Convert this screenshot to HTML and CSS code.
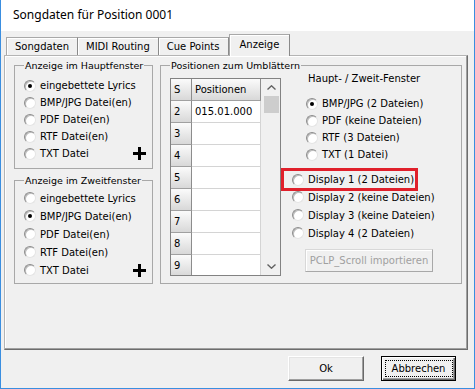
FILE: index.html
```html
<!DOCTYPE html>
<html>
  <head>
    <meta charset="utf-8">
    <title>Songdaten für Position 0001</title>
    <link rel="stylesheet" href="styles.css">
  </head>
  <body>
    <div class="window">
      <div class="titlebar">Songdaten für Position 0001</div>

      <div class="tabs">
        <div class="tab">Songdaten</div>
        <div class="tab">MIDI Routing</div>
        <div class="tab">Cue Points</div>
        <div class="tab active">Anzeige</div>
      </div>

      <div class="panel">
        <div class="left-col">
          <fieldset class="group group-main">
            <legend>Anzeige im Hauptfenster</legend>
            <label class="radio checked"><span class="dot"></span>eingebettete Lyrics</label>
            <label class="radio"><span class="dot"></span>BMP/JPG Datei(en)</label>
            <label class="radio"><span class="dot"></span>PDF Datei(en)</label>
            <label class="radio"><span class="dot"></span>RTF Datei(en)</label>
            <label class="radio"><span class="dot"></span>TXT Datei
              <svg class="plus" width="13" height="13" viewBox="0 0 13 13">
                <rect x="0" y="5" width="13" height="3" fill="#000" />
                <rect x="5" y="0" width="3" height="13" fill="#000" />
              </svg>
            </label>
          </fieldset>

          <fieldset class="group group-second">
            <legend>Anzeige im Zweitfenster</legend>
            <label class="radio"><span class="dot"></span>eingebettete Lyrics</label>
            <label class="radio checked"><span class="dot"></span>BMP/JPG Datei(en)</label>
            <label class="radio"><span class="dot"></span>PDF Datei(en)</label>
            <label class="radio"><span class="dot"></span>RTF Datei(en)</label>
            <label class="radio"><span class="dot"></span>TXT Datei
              <svg class="plus" width="13" height="13" viewBox="0 0 13 13">
                <rect x="0" y="5" width="13" height="3" fill="#000" />
                <rect x="5" y="0" width="3" height="13" fill="#000" />
              </svg>
            </label>
          </fieldset>
        </div>

        <fieldset class="group group-wide">
          <legend>Positionen zum Umblättern</legend>
          <div class="group-body">
            <div class="grid">
              <div class="cells">
                <div class="cell head">S</div>
                <div class="cell head">Positionen</div>
                <div class="cell head">2</div>
                <div class="cell">015.01.000</div>
                <div class="cell head">3</div>
                <div class="cell"></div>
                <div class="cell head">4</div>
                <div class="cell"></div>
                <div class="cell head">5</div>
                <div class="cell"></div>
                <div class="cell head">6</div>
                <div class="cell"></div>
                <div class="cell head">7</div>
                <div class="cell"></div>
                <div class="cell head">8</div>
                <div class="cell"></div>
                <div class="cell head">9</div>
                <div class="cell"></div>
              </div>
              <div class="scrollbar">
                <div class="arrow">
                  <svg width="9" height="5" viewBox="0 0 9 5"><polyline points="0.5,4.5 4.5,0.8 8.5,4.5" fill="none" stroke="#606060" stroke-width="1.4" /></svg>
                </div>
                <div class="thumb"></div>
                <div class="track"></div>
                <div class="arrow">
                  <svg width="9" height="5" viewBox="0 0 9 5"><polyline points="0.5,0.5 4.5,4.2 8.5,0.5" fill="none" stroke="#606060" stroke-width="1.4" /></svg>
                </div>
              </div>
            </div>

            <div class="options">
              <div class="caption">Haupt- / Zweit-Fenster</div>
              <div class="file-list">
                <label class="radio checked"><span class="dot"></span>BMP/JPG (2 Dateien)</label>
                <label class="radio"><span class="dot"></span>PDF (keine Dateien)</label>
                <label class="radio"><span class="dot"></span>RTF (3 Dateien)</label>
                <label class="radio"><span class="dot"></span>TXT (1 Datei)</label>
              </div>
              <div class="display-list">
                <label class="radio marked"><span class="dot"></span>Display 1 (2 Dateien)</label>
                <label class="radio"><span class="dot"></span>Display 2 (keine Dateien)</label>
                <label class="radio"><span class="dot"></span>Display 3 (keine Dateien)</label>
                <label class="radio"><span class="dot"></span>Display 4 (2 Dateien)</label>
              </div>
              <button class="btn-disabled" disabled>PCLP_Scroll importieren</button>
            </div>
          </div>
        </fieldset>
      </div>

      <div class="footer">
        <button class="btn">Ok</button>
        <button class="btn default"><span class="focus">Abbrechen</span></button>
      </div>
    </div>
  </body>
</html>
```

FILE: styles.css
```css
body {
  margin: 0;
  font-family: "DejaVu Sans", sans-serif;
  font-size: 10px;
  color: #000;
  background-color: #fff;
}

.window {
  width: 475px;
  height: 389px;
  box-sizing: border-box;
  border: 1px solid #3a8ee0;
  border-top: none;
  background-color: #f0f0f0;
  display: flex;
  flex-direction: column;
}

.titlebar {
  height: 31px;
  line-height: 30px;
  padding-left: 12px;
  background-color: #fff;
  font-family: "Noto Sans", sans-serif;
  font-size: 12px;
}

/* Reiter */
.tabs {
  display: flex;
  align-items: flex-end;
  height: 24px;
  padding-left: 5px;
}

.tab {
  height: 18px;
  line-height: 18px;
  padding: 0 8px;
  box-sizing: border-box;
  border: 1px solid #a8a8a8;
  border-bottom: none;
  border-right-color: #8a8a8a;
  box-shadow: inset 1px 1px 0 #fff;
}

.tab + .tab {
  border-left: none;
}

.tab.active {
  position: relative;
  z-index: 1;
  height: 22px;
  line-height: 20px;
  margin-bottom: -1px;
  padding: 0 10px;
  border-left: 1px solid #a8a8a8;
  background-color: #f0f0f0;
}

.panel {
  height: 295px;
  margin: 0 6px 0 3px;
  box-sizing: border-box;
  border: 1px solid;
  border-color: #b4b4b4 #6d6d6d #6d6d6d #b4b4b4;
  box-shadow: inset -1px -1px 0 #a0a0a0, inset 1px 1px 0 #fff;
  display: flex;
  gap: 7px;
  padding: 3px 0 0 9px;
}

/* Gruppen */
.left-col {
  display: flex;
  flex-direction: column;
  gap: 5px;
}

.group {
  margin: 0;
  min-width: 0;
  box-sizing: border-box;
  border: 1px solid #a8a8a8;
  padding: 0 9px;
}

.group legend {
  padding: 0 1px;
  line-height: 13px;
  font-size: 9.5px;
  white-space: nowrap;
}

.group-main {
  width: 139px;
  height: 110px;
  padding-top: 5px;
}

.group-second {
  width: 139px;
  height: 110px;
  padding-top: 2px;
}

.group-second .radio {
  height: 18px;
}

.group-wide {
  width: 302px;
  height: 225px;
}

/* Optionsfelder */
.radio {
  display: flex;
  align-items: center;
  gap: 4px;
  height: 17px;
  white-space: nowrap;
}

.dot {
  position: relative;
  width: 12px;
  height: 12px;
  flex: none;
  box-sizing: border-box;
  border-radius: 50%;
  border: 1px solid;
  border-color: #8c8c8c #e4e4e4 #e4e4e4 #8c8c8c;
  background-color: #fff;
  box-shadow: inset 1px 1px 0 #bcbcbc;
}

.radio.checked .dot::after {
  content: "";
  position: absolute;
  left: 3px;
  top: 3px;
  width: 4px;
  height: 4px;
  border-radius: 50%;
  background-color: #000;
}

.plus {
  margin-left: auto;
  margin-right: -3px;
}

/* Tabelle */
.group-body {
  display: flex;
}

.grid {
  display: flex;
  width: 111px;
  height: 198px;
  margin-top: 6px;
  box-sizing: border-box;
  border: 1px solid #828282;
  background-color: #fff;
  overflow: hidden;
}

.cells {
  display: grid;
  grid-template-columns: 21px 69px;
  grid-auto-rows: 22px;
  align-content: start;
}

.cell {
  box-sizing: border-box;
  border-right: 1px solid #d4d4d4;
  border-bottom: 1px solid #d4d4d4;
  padding-left: 3px;
  line-height: 21px;
  white-space: nowrap;
  overflow: hidden;
}

.cell.head {
  background: linear-gradient(#fbfbfb, #d8d8d8);
  border-right-color: #8c8c8c;
  border-bottom-color: #a0a0a0;
}

.scrollbar {
  width: 19px;
  display: flex;
  flex-direction: column;
  background-color: #f0f0f0;
  padding-left: 2px;
  box-sizing: border-box;
}

.arrow {
  height: 17px;
  display: flex;
  align-items: center;
  justify-content: center;
}

.thumb {
  height: 17px;
  margin: 0 1px;
  background-color: #cdcdcd;
}

.track {
  flex: 1;
}

/* Rechte Spalte */
.options {
  width: 170px;
}

.caption {
  line-height: 14px;
  padding-left: 27px;
}

.file-list {
  margin-top: 9px;
  padding-left: 25px;
}

.display-list {
  margin-top: 8px;
  padding-left: 11px;
}

.display-list .radio {
  height: 18px;
}

.display-list .radio.marked {
  height: 17px;
  width: 123px;
  margin-left: -8px;
  padding-left: 8px;
  outline: 3px solid #e0202b;
  outline-offset: 0;
}

.btn-disabled {
  display: block;
  width: 128px;
  height: 23px;
  margin: 7px 0 0 24px;
  padding: 0;
  font-family: inherit;
  font-size: 10px;
  color: #a0a0a0;
  background-color: #f0f0f0;
  border: 1px solid;
  border-color: #d8d8d8 #a8a8a8 #a8a8a8 #d8d8d8;
  box-shadow: inset 1px 1px 0 #fff;
}

/* Schaltflächen unten */
.footer {
  display: flex;
  justify-content: flex-end;
  gap: 17px;
  padding: 6px 18px 0 0;
}

.btn {
  width: 76px;
  height: 25px;
  padding: 0;
  font-family: inherit;
  font-size: 10px;
  color: #000;
  background-color: #f0f0f0;
  box-sizing: border-box;
  border: 1px solid;
  border-color: #fff #696969 #696969 #fff;
  box-shadow: inset -1px -1px 0 #a0a0a0, inset 1px 1px 0 #e4e4e4;
}

.btn.default {
  width: 75px;
  border: 1px solid #000;
  box-shadow: inset 1px 1px 0 #fff, inset -1px -1px 0 #696969, inset -2px -2px 0 #a0a0a0;
  display: flex;
  align-items: center;
  justify-content: center;
}

.focus {
  display: block;
  width: 68px;
  height: 17px;
  line-height: 15px;
  box-sizing: border-box;
  border: 1px dotted #000;
}
```
